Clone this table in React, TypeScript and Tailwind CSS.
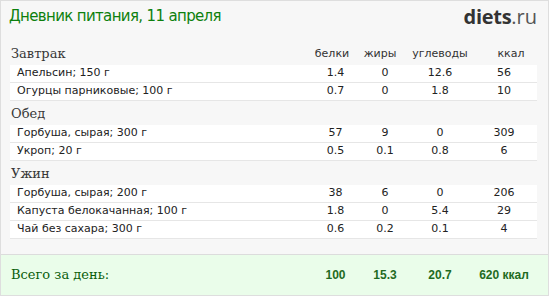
import React from "react";

type Row = { name: string; v: [string, string, string, string] };
type Section = { title: string; rows: Row[] };

const sections: Section[] = [
  {
    title: "Завтрак",
    rows: [
      { name: "Апельсин; 150 г", v: ["1.4", "0", "12.6", "56"] },
      { name: "Огурцы парниковые; 100 г", v: ["0.7", "0", "1.8", "10"] },
    ],
  },
  {
    title: "Обед",
    rows: [
      { name: "Горбуша, сырая; 300 г", v: ["57", "9", "0", "309"] },
      { name: "Укроп; 20 г", v: ["0.5", "0.1", "0.8", "6"] },
    ],
  },
  {
    title: "Ужин",
    rows: [
      { name: "Горбуша, сырая; 200 г", v: ["38", "6", "0", "206"] },
      { name: "Капуста белокачанная; 100 г", v: ["1.8", "0", "5.4", "29"] },
      { name: "Чай без сахара; 300 г", v: ["0.6", "0.2", "0.1", "4"] },
    ],
  },
];

const sans = { fontFamily: '"DejaVu Sans", Verdana, sans-serif' };
const serif = { fontFamily: '"DejaVu Serif", Georgia, serif' };

function Values({ v, className }: { v: string[]; className?: string }) {
  return (
    <>
      <div className={"w-[51px] text-center " + (className ?? "")}>{v[0]}</div>
      <div className={"w-[48px] text-center " + (className ?? "")}>{v[1]}</div>
      <div className={"w-[62px] text-center " + (className ?? "")}>{v[2]}</div>
      <div className={"w-[66px] text-center " + (className ?? "")}>{v[3]}</div>
    </>
  );
}

export default function App() {
  return (
    <div className="w-[549px] h-[296px] border border-[#dedede] bg-[#f7f7f7] flex flex-col">
      <div className="h-[40px] flex items-start justify-between">
        <div
          className="pl-[8px] pt-[5px] text-[15px] leading-[20px] tracking-[-0.65px] text-[#0d800d]"
          style={sans}
        >
          Дневник питания, 11 апреля
        </div>
        <div
          className="pr-[11px] pt-[5px] text-[20px] leading-[22px] text-[#333]"
          style={{ fontFamily: '"Open Sans", sans-serif' }}
        >
          <span className="font-bold tracking-[-0.3px]">diets</span>
          <span className="text-[#555]">.ru</span>
        </div>
      </div>
      <div className="px-[9px] pr-[11px] flex flex-col">
        {sections.map((s, si) => (
          <div key={s.title} className="flex flex-col">
            <div className="h-[24px] flex items-end pb-[3px]">
              <div
                className="pl-[1px] text-[13px] leading-[16px] text-[#383838] flex-1"
                style={serif}
              >
                {s.title}
              </div>
              {si === 0 && (
                <div
                  className="flex text-[11px] leading-[14px] text-[#333] mr-[-8px] pb-[1px]"
                  style={sans}
                >
                  <div className="w-[50px] text-center">белки</div>
                  <div className="w-[46px] text-center">жиры</div>
                  <div className="w-[74px] text-center">углеводы</div>
                  <div className="w-[68px] text-center">ккал</div>
                </div>
              )}
            </div>
            {s.rows.map((r) => (
              <div
                key={r.name}
                className="h-[18px] bg-white border-b border-[#e6e6e6] flex items-center text-[11px] text-[#222]"
                style={sans}
              >
                <div className="flex-1 pl-[7px]">{r.name}</div>
                <Values v={r.v} />
              </div>
            ))}
          </div>
        ))}
      </div>
      <div className="flex-1" />
      <div className="h-[41px] border-t border-[#dcdcdc] bg-[#eafdea] px-[9px] pr-[11px] flex items-center">
        <div
          className="flex-1 pl-[1px] text-[13px] text-[#0b5e0b]"
          style={serif}
        >
          Всего за день:
        </div>
        <div
          className="flex text-[12px] font-bold text-[#1f6b1f]"
          style={{ fontFamily: '"Liberation Sans", Arial, sans-serif' }}
        >
          <Values v={["100", "15.3", "20.7", "620 ккал"]} />
        </div>
      </div>
    </div>
  );
}
